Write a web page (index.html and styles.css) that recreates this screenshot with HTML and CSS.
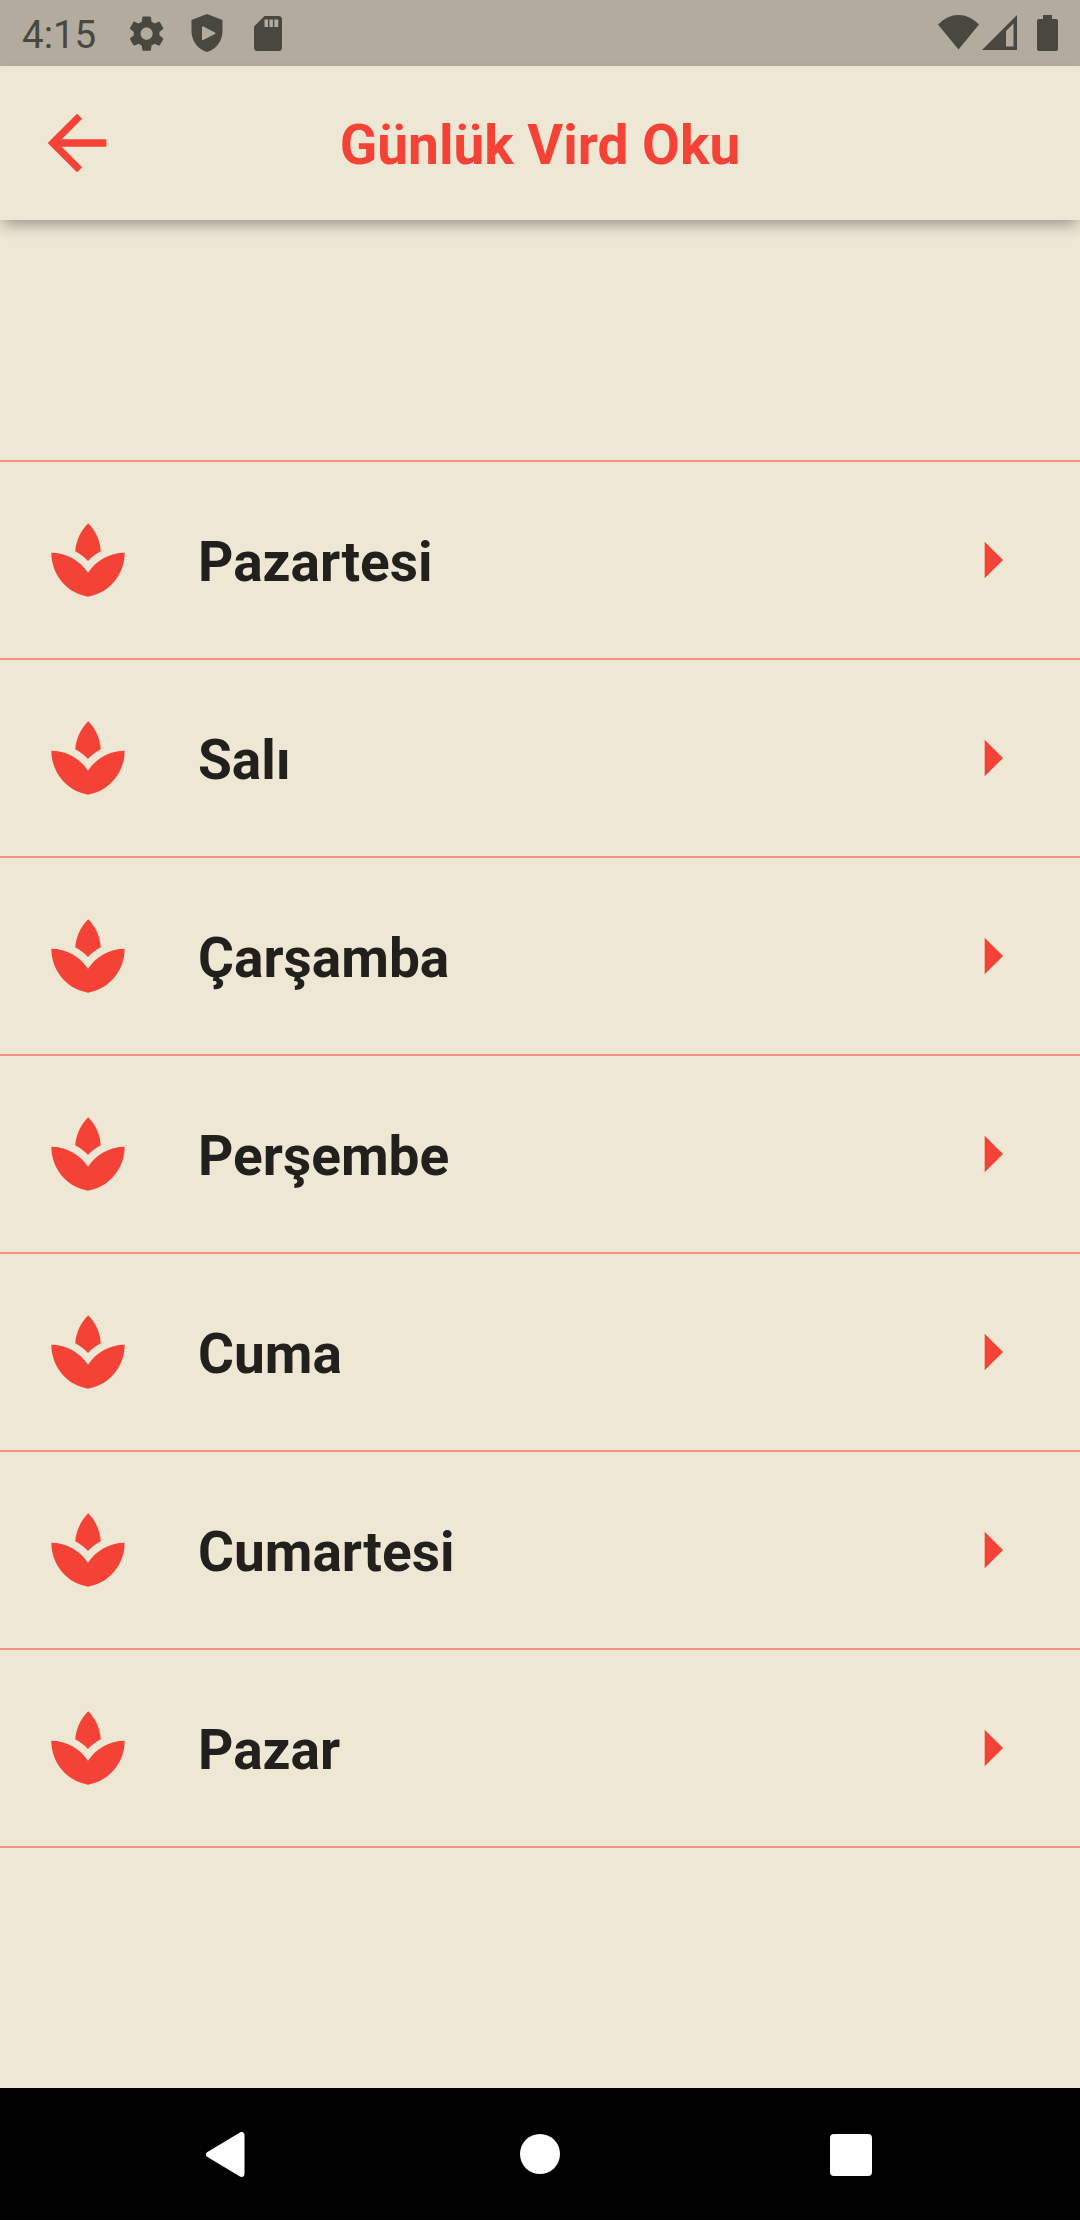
FILE: index.html
```html
<!DOCTYPE html>
<html lang="tr">
<head>
<meta charset="utf-8">
<title>Günlük Vird Oku</title>
<link rel="stylesheet" href="styles.css">
</head>
<body>
<svg class="defs" aria-hidden="true">
  <symbol id="spa" viewBox="0 0 24 24"><path d="M15.49 9.63c-.18-2.79-1.31-5.51-3.43-7.63-2.14 2.14-3.32 4.86-3.55 7.63 1.28.68 2.46 1.56 3.49 2.63 1.03-1.06 2.21-1.94 3.49-2.63zM12 15.45C9.85 12.17 6.18 10 2 10c0 5.32 3.36 9.82 8.03 11.49.63.23 1.29.4 1.97.51.68-.12 1.33-.29 1.97-.51C18.64 19.82 22 15.32 22 10c-4.18 0-7.85 2.17-10 5.45z"/></symbol>
  <symbol id="next" viewBox="0 0 24 24"><path d="M10 17l5-5-5-5v10z"/></symbol>
</svg>
<div class="screen">
  <div class="status">
    <div class="status-left">
      <span class="clock">4:15</span>
      <svg class="st-icon" viewBox="0 0 24 24"><path d="M19.43 12.98c.04-.32.07-.64.07-.98s-.03-.66-.07-.98l2.11-1.65c.19-.15.24-.42.12-.64l-2-3.46c-.12-.22-.39-.3-.61-.22l-2.49 1c-.52-.4-1.08-.73-1.69-.98l-.38-2.65C14.46 2.18 14.25 2 14 2h-4c-.25 0-.46.18-.49.42l-.38 2.65c-.61.25-1.17.59-1.69.98l-2.49-1c-.23-.09-.49 0-.61.22l-2 3.46c-.13.22-.07.49.12.64l2.11 1.65c-.04.32-.07.65-.07.98s.03.66.07.98l-2.11 1.65c-.19.15-.24.42-.12.64l2 3.46c.12.22.39.3.61.22l2.49-1c.52.4 1.08.73 1.69.98l.38 2.65c.03.24.24.42.49.42h4c.25 0 .46-.18.49-.42l.38-2.65c.61-.25 1.17-.59 1.69-.98l2.49 1c.23.09.49 0 .61-.22l2-3.46c.12-.22.07-.49-.12-.64l-2.11-1.65zM12 15.500c-1.930 0-3.500-1.570-3.500-3.500s1.570-3.500 3.500-3.500 3.500 1.570 3.500 3.500-1.570 3.500-3.500 3.500z"/></svg>
      <svg class="st-shield" viewBox="0 0 32 38"><path fill-rule="evenodd" d="M16 0L31.500 6V17C31.500 27 25 35.500 16 38C7 35.500.5 27 .5 17V6ZM11 13V25.500Q11 26.500 12 26L24 20Q25 19.200 24 18.500L12 12.200Q11 12 11 13Z"/></svg>
      <svg class="st-sd" viewBox="0 0 28 35"><path fill-rule="evenodd" d="M10.500 0H24.500Q28 0 28 3.500V31.500Q28 35 24.500 35H3.500Q0 35 0 31.500V10.500ZM10.500 3.500V11H14V3.500ZM15.400 3.500V11H18.900V3.500ZM20.300 3.500V11H24.200V3.500Z"/></svg>
    </div>
    <div class="status-right">
      <svg class="st-wifi" viewBox="0 0 41 35"><path d="M20.500 34.500L0 9.500Q9 0 20.500 0T41 9.500Z"/></svg>
      <svg class="st-signal" viewBox="0 0 35 35"><path fill-rule="evenodd" d="M35 0V35H0ZM31.500 8.500L24 16V31.500H31.500Z"/></svg>
      <svg class="st-battery" viewBox="0 0 21 36"><path d="M6 0H15V4H19Q21 4 21 6V34Q21 36 19 36H2Q0 36 0 34V6Q0 4 2 4H6Z"/></svg>
    </div>
  </div>
  <header class="appbar">
    <svg class="back" viewBox="0 0 24 24"><path d="M20 11H7.830l5.590-5.590L12 4l-8 8 8 8 1.410-1.410L7.830 13H20v-2z"/></svg>
    <h1 class="title">Günlük Vird Oku</h1>
  </header>
  <main class="content">
    <ul class="days">
      <li class="day"><svg class="icon"><use href="#spa"/></svg><span class="name">Pazartesi</span><svg class="icon"><use href="#next"/></svg></li>
      <li class="day"><svg class="icon"><use href="#spa"/></svg><span class="name">Salı</span><svg class="icon"><use href="#next"/></svg></li>
      <li class="day"><svg class="icon"><use href="#spa"/></svg><span class="name">Çarşamba</span><svg class="icon"><use href="#next"/></svg></li>
      <li class="day"><svg class="icon"><use href="#spa"/></svg><span class="name">Perşembe</span><svg class="icon"><use href="#next"/></svg></li>
      <li class="day"><svg class="icon"><use href="#spa"/></svg><span class="name">Cuma</span><svg class="icon"><use href="#next"/></svg></li>
      <li class="day"><svg class="icon"><use href="#spa"/></svg><span class="name">Cumartesi</span><svg class="icon"><use href="#next"/></svg></li>
      <li class="day"><svg class="icon"><use href="#spa"/></svg><span class="name">Pazar</span><svg class="icon"><use href="#next"/></svg></li>
    </ul>
  </main>
  <nav class="navbar">
    <svg class="nav-back" viewBox="0 0 39 45"><path d="M3 22.500L35.500 3V42Z"/></svg>
    <span class="nav-home"></span>
    <span class="nav-recent"></span>
  </nav>
</div>
</body>
</html>
```

FILE: styles.css
```css
* {
  box-sizing: border-box;
}

body {
  margin: 0;
  font-family: Roboto, "Liberation Sans", sans-serif;
}

svg {
  display: block;
  flex: none;
}

.defs {
  display: none;
}

.screen {
  display: flex;
  flex-direction: column;
  width: 1080px;
  height: 2220px;
  background: #eee7d4;
  overflow: hidden;
}

.status {
  display: flex;
  justify-content: space-between;
  height: 66px;
  padding: 0 22px;
  background: #b3ac9e;
  color: #484740;
  fill: #484740;
}

.status-left,
.status-right {
  display: flex;
  align-items: flex-start;
}

.clock {
  width: 104px;
  font-size: 38.5px;
  line-height: 70px;
}

.st-icon {
  width: 41.25px;
  height: 41.25px;
  margin-top: 13px;
}

.st-shield {
  width: 32px;
  height: 38px;
  margin: 14px 0 0 24px;
}

.st-sd {
  width: 28px;
  height: 35px;
  margin: 16px 0 0 31px;
}

.st-wifi {
  width: 41px;
  height: 35px;
  margin-top: 15px;
}

.st-signal {
  width: 35px;
  height: 35px;
  margin: 15px 0 0 3px;
}

.st-battery {
  width: 21px;
  height: 36px;
  margin: 15px 0 0 20px;
}

.appbar {
  display: grid;
  grid-template-columns: 121px 1fr 121px;
  align-items: center;
  height: 154px;
  background: #eee7d4;
  box-shadow: 0 8px 14px -3px rgba(0, 0, 0, 0.35);
  color: #f44336;
}

.back {
  width: 88px;
  height: 88px;
  margin-left: 33.3px;
  fill: #f44336;
}

.title {
  margin: 0;
  padding-top: 4px;
  font-size: 55px;
  font-weight: 700;
  line-height: 66px;
  text-align: center;
  white-space: nowrap;
}

.content {
  flex: 1;
  display: flex;
  flex-direction: column;
  justify-content: center;
}

.days {
  margin: 0;
  padding: 0;
  list-style: none;
  border-top: 2px solid #f39482;
}

.day {
  display: flex;
  align-items: center;
  height: 198px;
  padding: 0 44px;
  border-bottom: 2px solid #f39482;
}

.icon {
  width: 88px;
  height: 88px;
  fill: #f44336;
}

.name {
  flex: 1;
  padding: 4px 0 0 66px;
  color: #21201d;
  font-size: 55px;
  font-weight: 700;
  line-height: 66px;
}

.navbar {
  display: flex;
  align-items: flex-start;
  height: 132px;
  padding-left: 206px;
  background: #000;
}

.nav-back {
  width: 39px;
  height: 45px;
  margin-top: 44px;
  fill: #fff;
  stroke: #fff;
  stroke-width: 6px;
  stroke-linejoin: round;
}

.nav-home {
  width: 40px;
  height: 40px;
  margin: 46px 0 0 275px;
  border-radius: 50%;
  background: #fff;
}

.nav-recent {
  width: 41.5px;
  height: 41.5px;
  margin: 46px 0 0 270px;
  border-radius: 4px;
  background: #fff;
}
```
